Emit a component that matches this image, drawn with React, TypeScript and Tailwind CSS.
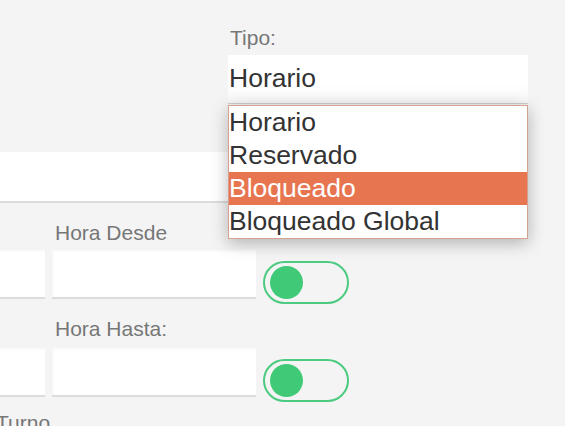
const options = ['Horario', 'Reservado', 'Bloqueado', 'Bloqueado Global'];

function Toggle() {
    return (
        <div className="mt-[11px] flex h-[43px] w-[86px] shrink-0 items-center rounded-full border-2 border-[#4ccb80] pl-[5px]">
            <div className="h-[33px] w-[33px] rounded-full bg-[#40c977]" />
        </div>
    );
}

function Input({ className }: { className: string }) {
    return (
        <div className={`h-[49px] shrink-0 border-b-2 border-[#dcdcdc] bg-white shadow-[inset_1px_1px_3px_rgba(0,0,0,0.04)] ${className}`} />
    );
}

export default function App() {
    const selected = 'Bloqueado';

    return (
        <div className="relative h-[426px] w-[565px] overflow-hidden bg-[#f4f4f4] font-['Liberation_Sans',Arial,sans-serif]">
            {/* Tipo select */}
            <div className="relative ml-[228px] w-[300px] pt-[26px]">
                <div className="h-[24px] pl-[2px] text-[21px] leading-[24px] text-[#777]">Tipo:</div>
                <div className="mt-[5px] flex h-[49px] items-center border-b border-[#cfcfcf] bg-gradient-to-b from-white from-60% to-[#f7f7f7] pl-[1px] text-[26.5px] text-[#333]">
                    Horario
                </div>

                {/* open listbox */}
                <div className="absolute left-0 top-[105px] z-10 w-[300px] border border-[#d6a28f] bg-white shadow-[0_4px_16px_rgba(0,0,0,0.28)]">
                    {options.map((o) => (
                        <div
                            key={o}
                            className={`h-[33px] text-[26.5px] leading-[33px] ${o === selected ? 'bg-[#e7754f] text-white' : 'text-[#333]'}`}
                        >
                            {o}
                        </div>
                    ))}
                </div>
            </div>

            {/* wide field */}
            <div className="mt-[48px] h-[51px] w-[528px] border-b-2 border-[#dcdcdc] bg-white" />

            {/* Hora Desde */}
            <div className="ml-[55px] mt-[18px] h-[24px] text-[21px] leading-[24px] text-[#777]">Hora Desde</div>
            <div className="ml-[-150px] mt-[5px] flex items-start gap-[7px]">
                <Input className="w-[195px]" />
                <Input className="w-[204px]" />
                <Toggle />
            </div>

            {/* Hora Hasta */}
            <div className="ml-[55px] mt-[13px] h-[24px] text-[21px] leading-[24px] text-[#777]">Hora Hasta:</div>
            <div className="ml-[-150px] mt-[7px] flex items-start gap-[7px]">
                <Input className="w-[195px]" />
                <Input className="w-[204px]" />
                <Toggle />
            </div>

            {/* Turno */}
            <div className="ml-[-4px] mt-[9px] h-[24px] text-[21px] leading-[24px] text-[#777]">Turno</div>
        </div>
    );
}
